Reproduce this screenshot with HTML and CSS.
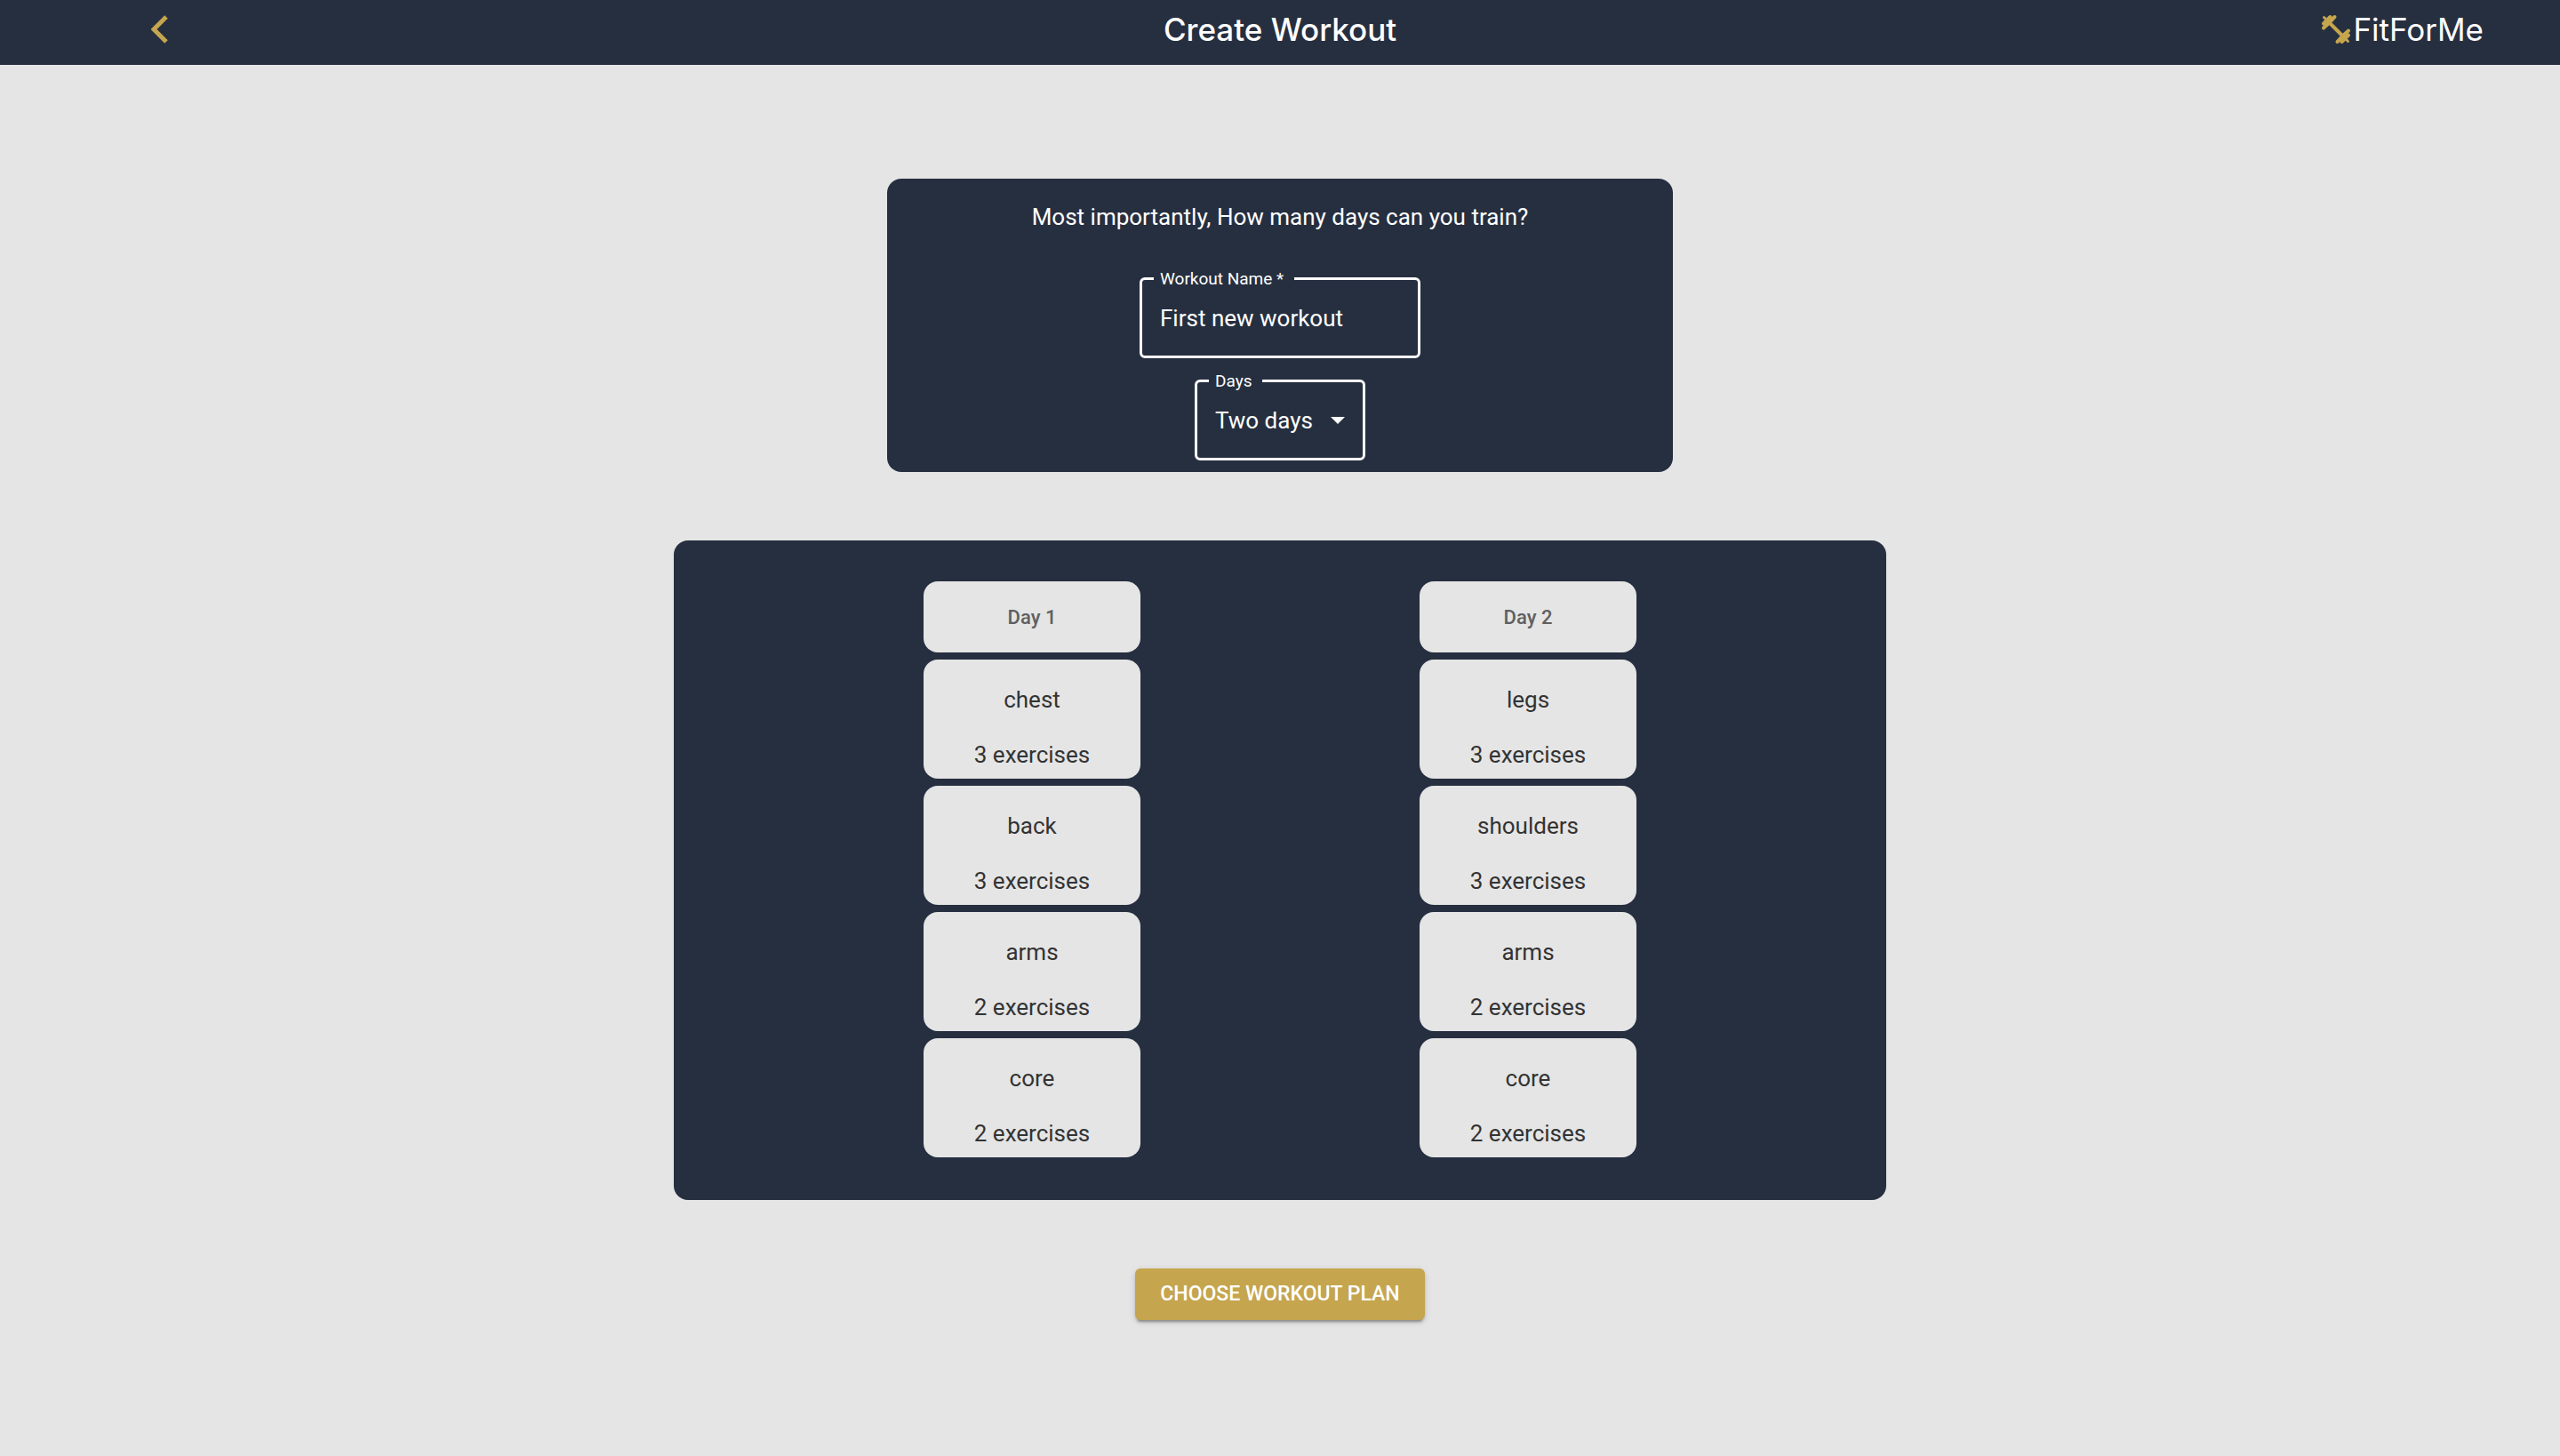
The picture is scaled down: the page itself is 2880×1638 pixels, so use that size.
FILE: index.html
```html
<!DOCTYPE html>
<html lang="en">
<head>
  <meta charset="utf-8">
  <meta name="viewport" content="width=device-width, initial-scale=1">
  <title>Create Workout - FitForMe</title>
  <link rel="stylesheet" href="styles.css">
</head>
<body>
  <header class="topbar">
    <button class="back" type="button" aria-label="Back">
      <svg width="20" height="34" viewBox="0 0 20 34" aria-hidden="true">
        <path d="M17 3 3 17l14 14" fill="none" stroke="currentColor" stroke-width="5"/>
      </svg>
    </button>
    <h1 class="title">Create Workout</h1>
    <a class="brand" href="#">
      <svg class="brand-icon" width="34" height="34" viewBox="0 0 34 34" aria-hidden="true">
        <g fill="none" stroke="currentColor" stroke-linecap="round">
          <path d="M9 9 25 25" stroke-width="4"/>
          <path d="M3.500 3.500 6 6M28 28 30.500 30.500" stroke-width="3"/>
          <path d="M3 15.500 15.500 3M18.500 31 31 18.500" stroke-width="4"/>
          <path d="M3 10.500 10.500 3M23.500 31 31 23.500" stroke-width="4"/>
          <path d="M6 11.500 11.500 6M22.500 28 28 22.500" stroke-width="6"/>
        </g>
      </svg>
      <span>FitForMe</span>
    </a>
  </header>

  <main class="page">
    <form class="panel setup" id="setup">
      <p class="question">Most importantly, How many days can you train?</p>
      <fieldset class="field field-name">
        <legend><label for="name">Workout Name *</label></legend>
        <input class="control" id="name" type="text" value="First new workout" required>
      </fieldset>
      <fieldset class="field field-days">
        <legend><label for="days">Days</label></legend>
        <select class="control" id="days">
          <option selected>Two days</option>
          <option>Three days</option>
          <option>Four days</option>
        </select>
        <svg class="caret" width="16" height="8" viewBox="0 0 16 8" aria-hidden="true">
          <path d="M0 0h16L8 8z" fill="currentColor"/>
        </svg>
      </fieldset>
    </form>

    <div class="panel plan">
      <section class="day">
        <h2 class="card day-name">Day 1</h2>
        <div class="card muscle"><p>chest</p><p>3 exercises</p></div>
        <div class="card muscle"><p>back</p><p>3 exercises</p></div>
        <div class="card muscle"><p>arms</p><p>2 exercises</p></div>
        <div class="card muscle"><p>core</p><p>2 exercises</p></div>
      </section>
      <section class="day">
        <h2 class="card day-name">Day 2</h2>
        <div class="card muscle"><p>legs</p><p>3 exercises</p></div>
        <div class="card muscle"><p>shoulders</p><p>3 exercises</p></div>
        <div class="card muscle"><p>arms</p><p>2 exercises</p></div>
        <div class="card muscle"><p>core</p><p>2 exercises</p></div>
      </section>
    </div>

    <button class="submit" type="submit" form="setup">CHOOSE WORKOUT PLAN</button>
  </main>
</body>
</html>
```

FILE: styles.css
```css
:root {
  --navy: #262f40;
  --gold: #c5a54e;
  --grey: #e5e5e5;
}

* {
  box-sizing: border-box;
}

body {
  margin: 0;
  background: var(--grey);
  color: #333;
  font-family: Roboto, "Liberation Sans", sans-serif;
  font-size: 26px;
  line-height: 38px;
}

h1,
h2,
p {
  margin: 0;
}

/* Top bar */
.topbar {
  display: grid;
  grid-template-columns: 1fr auto 1fr;
  align-items: center;
  padding: 10px 0 17px;
  background: var(--navy);
  color: #fff;
  font-family: Inter, Roboto, sans-serif;
  font-size: 35px;
  line-height: 46px;
}

.back {
  display: flex;
  justify-self: start;
  margin-left: 170px;
  padding: 0;
  border: 0;
  background: none;
  color: var(--gold);
}

.title {
  font-size: 35px;
  font-weight: 500;
}

.brand {
  display: flex;
  align-items: center;
  justify-self: end;
  gap: 2px;
  margin-right: 86px;
  color: #fff;
  text-decoration: none;
}

.brand-icon {
  color: var(--gold);
}

/* Page */
.page {
  display: flex;
  flex-direction: column;
  align-items: center;
  gap: 77px;
  padding: 128px 24px;
}

.panel {
  width: 100%;
  border-radius: 16px;
  background: var(--navy);
}

/* Workout set-up */
.setup {
  display: flex;
  flex-direction: column;
  align-items: center;
  gap: 14px;
  max-width: 884px;
  padding: 24px 24px 13px;
  color: #fff;
}

.question {
  padding-bottom: 25px;
  text-align: center;
}

.field {
  min-width: 0;
  margin: 0;
  padding: 0;
  border: 3px solid #fff;
  border-radius: 6px;
}

.field legend {
  margin-left: 13px;
  padding: 0 12px 0 7px;
  font-size: 19px;
  line-height: 23px;
}

.field-name {
  width: 316px;
}

.field-days {
  position: relative;
  width: 192px;
}

.control {
  display: block;
  width: 100%;
  height: 75px;
  padding: 0 20px 10px;
  border: 0;
  outline: 0;
  background: none;
  color: inherit;
  font: inherit;
  appearance: none;
}

.caret {
  position: absolute;
  right: 20px;
  bottom: 38px;
  pointer-events: none;
}

/* Plan */
.plan {
  display: flex;
  justify-content: center;
  gap: 314px;
  max-width: 1364px;
  padding: 46px 24px 48px;
  text-align: center;
}

.day {
  display: flex;
  flex-direction: column;
  flex: 0 1 244px;
  gap: 8px;
}

.card {
  border-radius: 16px;
  background: var(--grey);
}

.day-name {
  padding: 22px 16px 20px;
  color: #606060;
  font-size: 22px;
  font-weight: 500;
}

.muscle {
  display: flex;
  flex-direction: column;
  gap: 24px;
  padding: 26px 16px 8px;
}

.submit {
  padding: 10px 28px;
  border: 0;
  border-radius: 6px;
  background: var(--gold);
  box-shadow: 0 5px 2px -3px rgb(0 0 0 / 20%), 0 3px 3px rgb(0 0 0 / 14%), 0 2px 8px rgb(0 0 0 / 12%);
  color: #fff;
  font: 500 23px/38px Roboto, "Liberation Sans", sans-serif;
}
```
